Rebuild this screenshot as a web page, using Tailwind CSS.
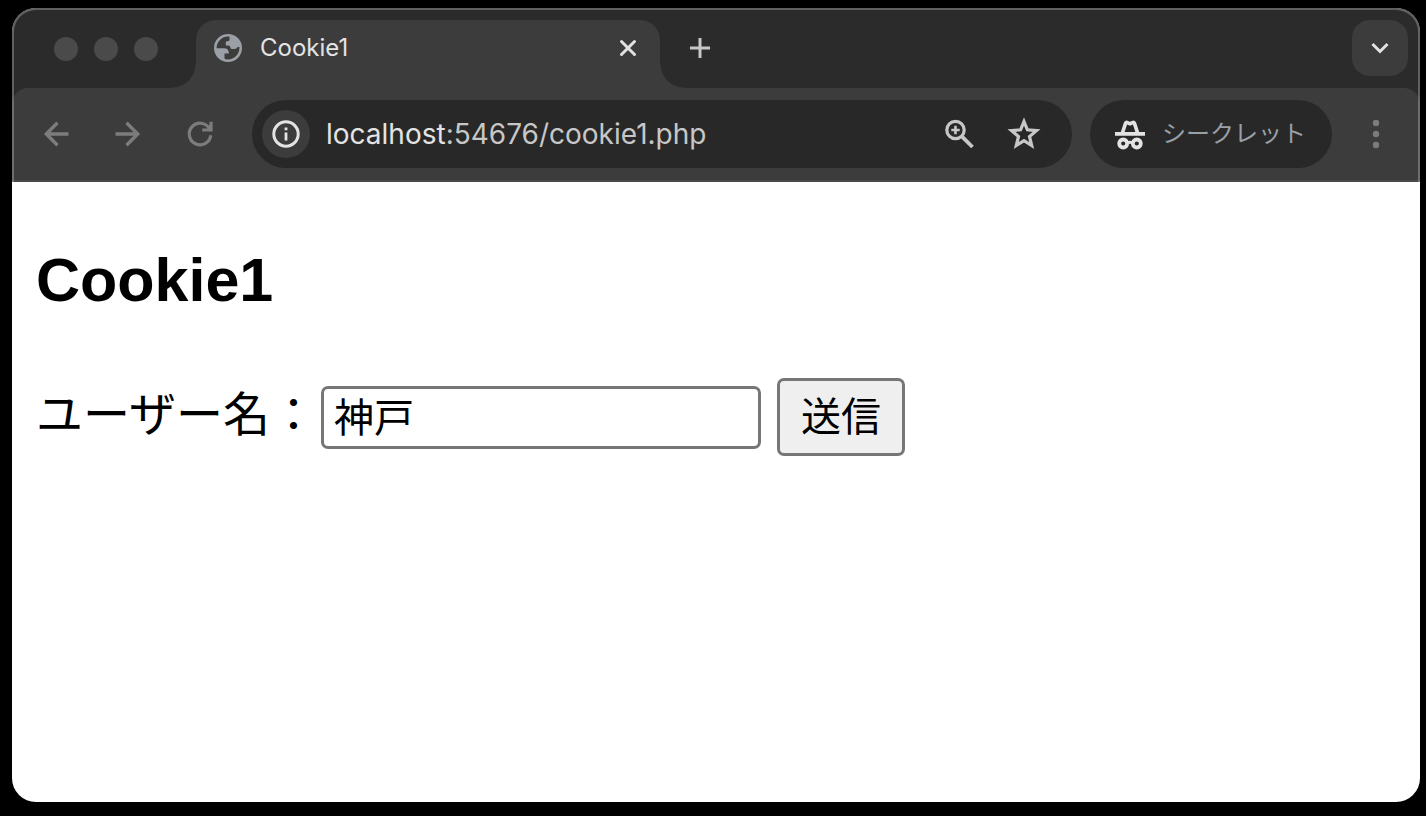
<!DOCTYPE html>
<html lang="ja">
<head>
<meta charset="utf-8">
<title>Cookie1</title>
<script src="https://cdn.jsdelivr.net/npm/@tailwindcss/browser@4"></script>
</head>
<body class="flex min-h-screen flex-col bg-black pt-2 pr-1.5 pb-3.5 pl-3 font-['Inter','Noto_Sans_CJK_JP',sans-serif]">
<div class="flex flex-1 flex-col overflow-hidden rounded-3xl bg-white">
  <header class="relative bg-[#2b2b2b]">
    <div class="flex h-20 items-end">
      <div class="flex w-46 shrink-0 gap-4 self-center pt-0.5 pl-[42px]">
        <span class="size-6 rounded-full bg-[#4a4a4a]"></span>
        <span class="size-6 rounded-full bg-[#4a4a4a]"></span>
        <span class="size-6 rounded-full bg-[#4a4a4a]"></span>
      </div>
      <div class="relative flex h-[68px] w-[464px] items-center rounded-t-[20px] bg-[#3c3c3c] pr-5 pb-3 pl-[18px]">
        <span class="absolute bottom-0 -left-6 size-6 bg-[radial-gradient(circle_at_0_0,#2b2b2b_23px,#3c3c3c_24px)]"></span>
        <span class="absolute -right-6 bottom-0 size-6 bg-[radial-gradient(circle_at_100%_0,#2b2b2b_23px,#3c3c3c_24px)]"></span>
        <svg class="size-7" viewBox="0 0 28 28" fill="none" aria-hidden="true">
          <circle cx="14" cy="14" r="12.700" stroke="#9aa0a6" stroke-width="2.600"/>
          <path fill="#9aa0a6" d="M15.500 2V5.800Q15.500 7.200 14 7.200H12.800Q11.800 7.200 11.800 8.500V11.500H14.500Q16.500 11.500 16.500 14Q16.500 15 18 15H20.500Q22.800 15 23.500 13H26.500Q26.500 4 15.500 2ZM2 14.200H10Q14.500 14.200 14.800 18.500V19.500H10.500V25.500L8 26Q1 22 2 14.200Z"/>
        </svg>
        <span class="ml-[18px] flex-1 text-[24px] leading-8 text-[#e3e3e3]">Cookie1</span>
        <button type="button" aria-label="タブを閉じる" class="size-6"><svg class="size-6" viewBox="0 0 24 24" fill="none" stroke="#e3e3e3" stroke-width="3" stroke-linecap="round"><path d="M5.500 5.500l13 13M18.500 5.500l-13 13"/></svg></button>
      </div>
      <button type="button" aria-label="新しいタブ" class="ml-7 size-6 self-center"><svg class="size-6" viewBox="0 0 24 24" fill="none" stroke="#c7c7c7" stroke-width="3"><path d="M12 2v20M2 12h20"/></svg></button>
      <button type="button" aria-label="タブを検索" class="mr-3 ml-auto flex size-14 items-center justify-center self-center rounded-[18px] bg-[#3c3c3c]"><svg class="size-6" viewBox="0 0 24 24" fill="none" stroke="#e3e3e3" stroke-width="3"><path d="M4.500 8l7.500 7.500L19.500 8"/></svg></button>
    </div>
    <div class="flex h-[94px] items-center rounded-t-2xl border-b-2 border-[#4a4a4a] bg-[#3c3c3c] pr-[26px] pl-[26px]">
      <div class="flex gap-9">
        <button type="button" aria-label="戻る" class="size-9"><svg class="size-9" viewBox="0 0 36 36" fill="none" stroke="#7c7c7c" stroke-width="3.400"><path d="M30.500 18H8M19.500 6.800L8.300 18l11.200 11.200"/></svg></button>
        <button type="button" aria-label="進む" class="size-9"><svg class="size-9" viewBox="0 0 36 36" fill="none" stroke="#7c7c7c" stroke-width="3.400"><path d="M5.500 18h22.500M16.500 6.800L27.700 18 16.500 29.200"/></svg></button>
        <button type="button" aria-label="再読み込み" class="size-9"><svg class="size-9" viewBox="0 0 36 36" fill="none" stroke="#7c7c7c" stroke-width="3.200"><path d="M28.800 19.200A10.800 10.800 0 1 1 27.500 12.700M29 5.800V14H20.200"/></svg></button>
      </div>
      <div class="ml-[34px] flex h-[68px] min-w-0 flex-1 items-center rounded-full bg-[#282828] pr-[30px] pl-2.5">
        <button type="button" aria-label="サイト情報" class="flex size-12 shrink-0 items-center justify-center rounded-full bg-[#3c3c3c]"><svg class="size-7" viewBox="0 0 28 28" fill="none" stroke="#e3e3e3"><circle cx="14" cy="14" r="12.200" stroke-width="3"/><path d="M14 12.500V20.500M14 7.500V10.300" stroke-width="2.800"/></svg></button>
        <div class="relative ml-4 min-w-0 flex-1 text-[28px] leading-9">
          <input aria-label="アドレス" type="text" value="localhost:54676/cookie1.php" class="w-full text-transparent caret-[#e3e3e3] outline-none">
          <div aria-hidden="true" class="pointer-events-none absolute inset-0 whitespace-nowrap text-[#c7c7c7]"><span class="text-[#e3e3e3]">localhost</span>:54676/cookie1.php</div>
        </div>
        <button type="button" aria-label="ズーム" class="size-8"><svg class="size-8" viewBox="0 0 32 32" fill="none" stroke="#c7c7c7"><circle cx="13.500" cy="12" r="8.700" stroke-width="3.200"/><path d="M19.800 18.300L30.500 29" stroke-width="3.800"/><path d="M13.500 7.800v8.400M9.300 12h8.400" stroke-width="2.600"/></svg></button>
        <button type="button" aria-label="ブックマーク" class="ml-8 size-9"><svg class="size-9" viewBox="0 0 36 36" fill="none" stroke="#c7c7c7" stroke-width="3.200"><path d="M18 5.500L21.400 13.800L30.500 14.600L23.500 20.500L25.700 29.500L18 24.700L10.300 29.500L12.500 20.500L5.500 14.600L14.600 13.800Z"/></svg></button>
      </div>
      <div class="ml-[18px] flex h-[68px] w-[242px] shrink-0 items-center rounded-full bg-[#282828] pl-6">
        <svg class="size-8" viewBox="0 0 32 32" fill="none" aria-hidden="true">
          <path fill="#e3e3e3" d="M1 14H31V17.700H1ZM6.500 15L9.700 5Q10.500 2.300 12.700 2.500L16 3.800L19.300 2.500Q21.500 2.300 22.300 5L25.500 15H21.700L18.900 6.500L16 7.700L13.100 6.500L10.300 15Z"/>
          <circle cx="9.200" cy="25.500" r="4" stroke="#e3e3e3" stroke-width="3.800"/>
          <circle cx="22.800" cy="25.500" r="4" stroke="#e3e3e3" stroke-width="3.800"/>
          <path d="M13 25Q16 23.500 19 25" stroke="#e3e3e3" stroke-width="3"/>
        </svg>
        <span class="ml-4 text-[24px] leading-8 whitespace-nowrap text-[#9aa0a6]">シークレット</span>
      </div>
      <button type="button" aria-label="メニュー" class="ml-[26px] size-9"><svg class="size-9" viewBox="0 0 36 36" fill="#7c7c7c"><circle cx="18" cy="7" r="3.200"/><circle cx="18" cy="18" r="3.200"/><circle cx="18" cy="29" r="3.200"/></svg></button>
    </div>
    <div class="pointer-events-none absolute inset-0 rounded-t-3xl border-2 border-b-0 border-white/25"></div>
  </header>
  <main class="px-6 pt-[68px] text-black">
    <h1 class="font-['Liberation_Sans',sans-serif] text-[61px] leading-[60px] font-bold">Cookie1</h1>
    <form class="mt-[68px] flex items-center">
      <label for="user" class="mr-1 pb-1.5 text-[47px] leading-[70px] whitespace-nowrap">ユーザー名：</label>
      <input id="user" type="text" value="神戸" class="h-[63px] w-[440px] rounded-[7px] border-3 border-[#767676] px-2.5 pb-1 text-[40px] leading-[53px] outline-none">
      <button type="button" class="ml-4 h-[78px] w-32 rounded-[7px] border-3 border-[#767676] bg-[#efefef] text-[40px] leading-[72px]">送信</button>
    </form>
  </main>
</div>
</body>
</html>
